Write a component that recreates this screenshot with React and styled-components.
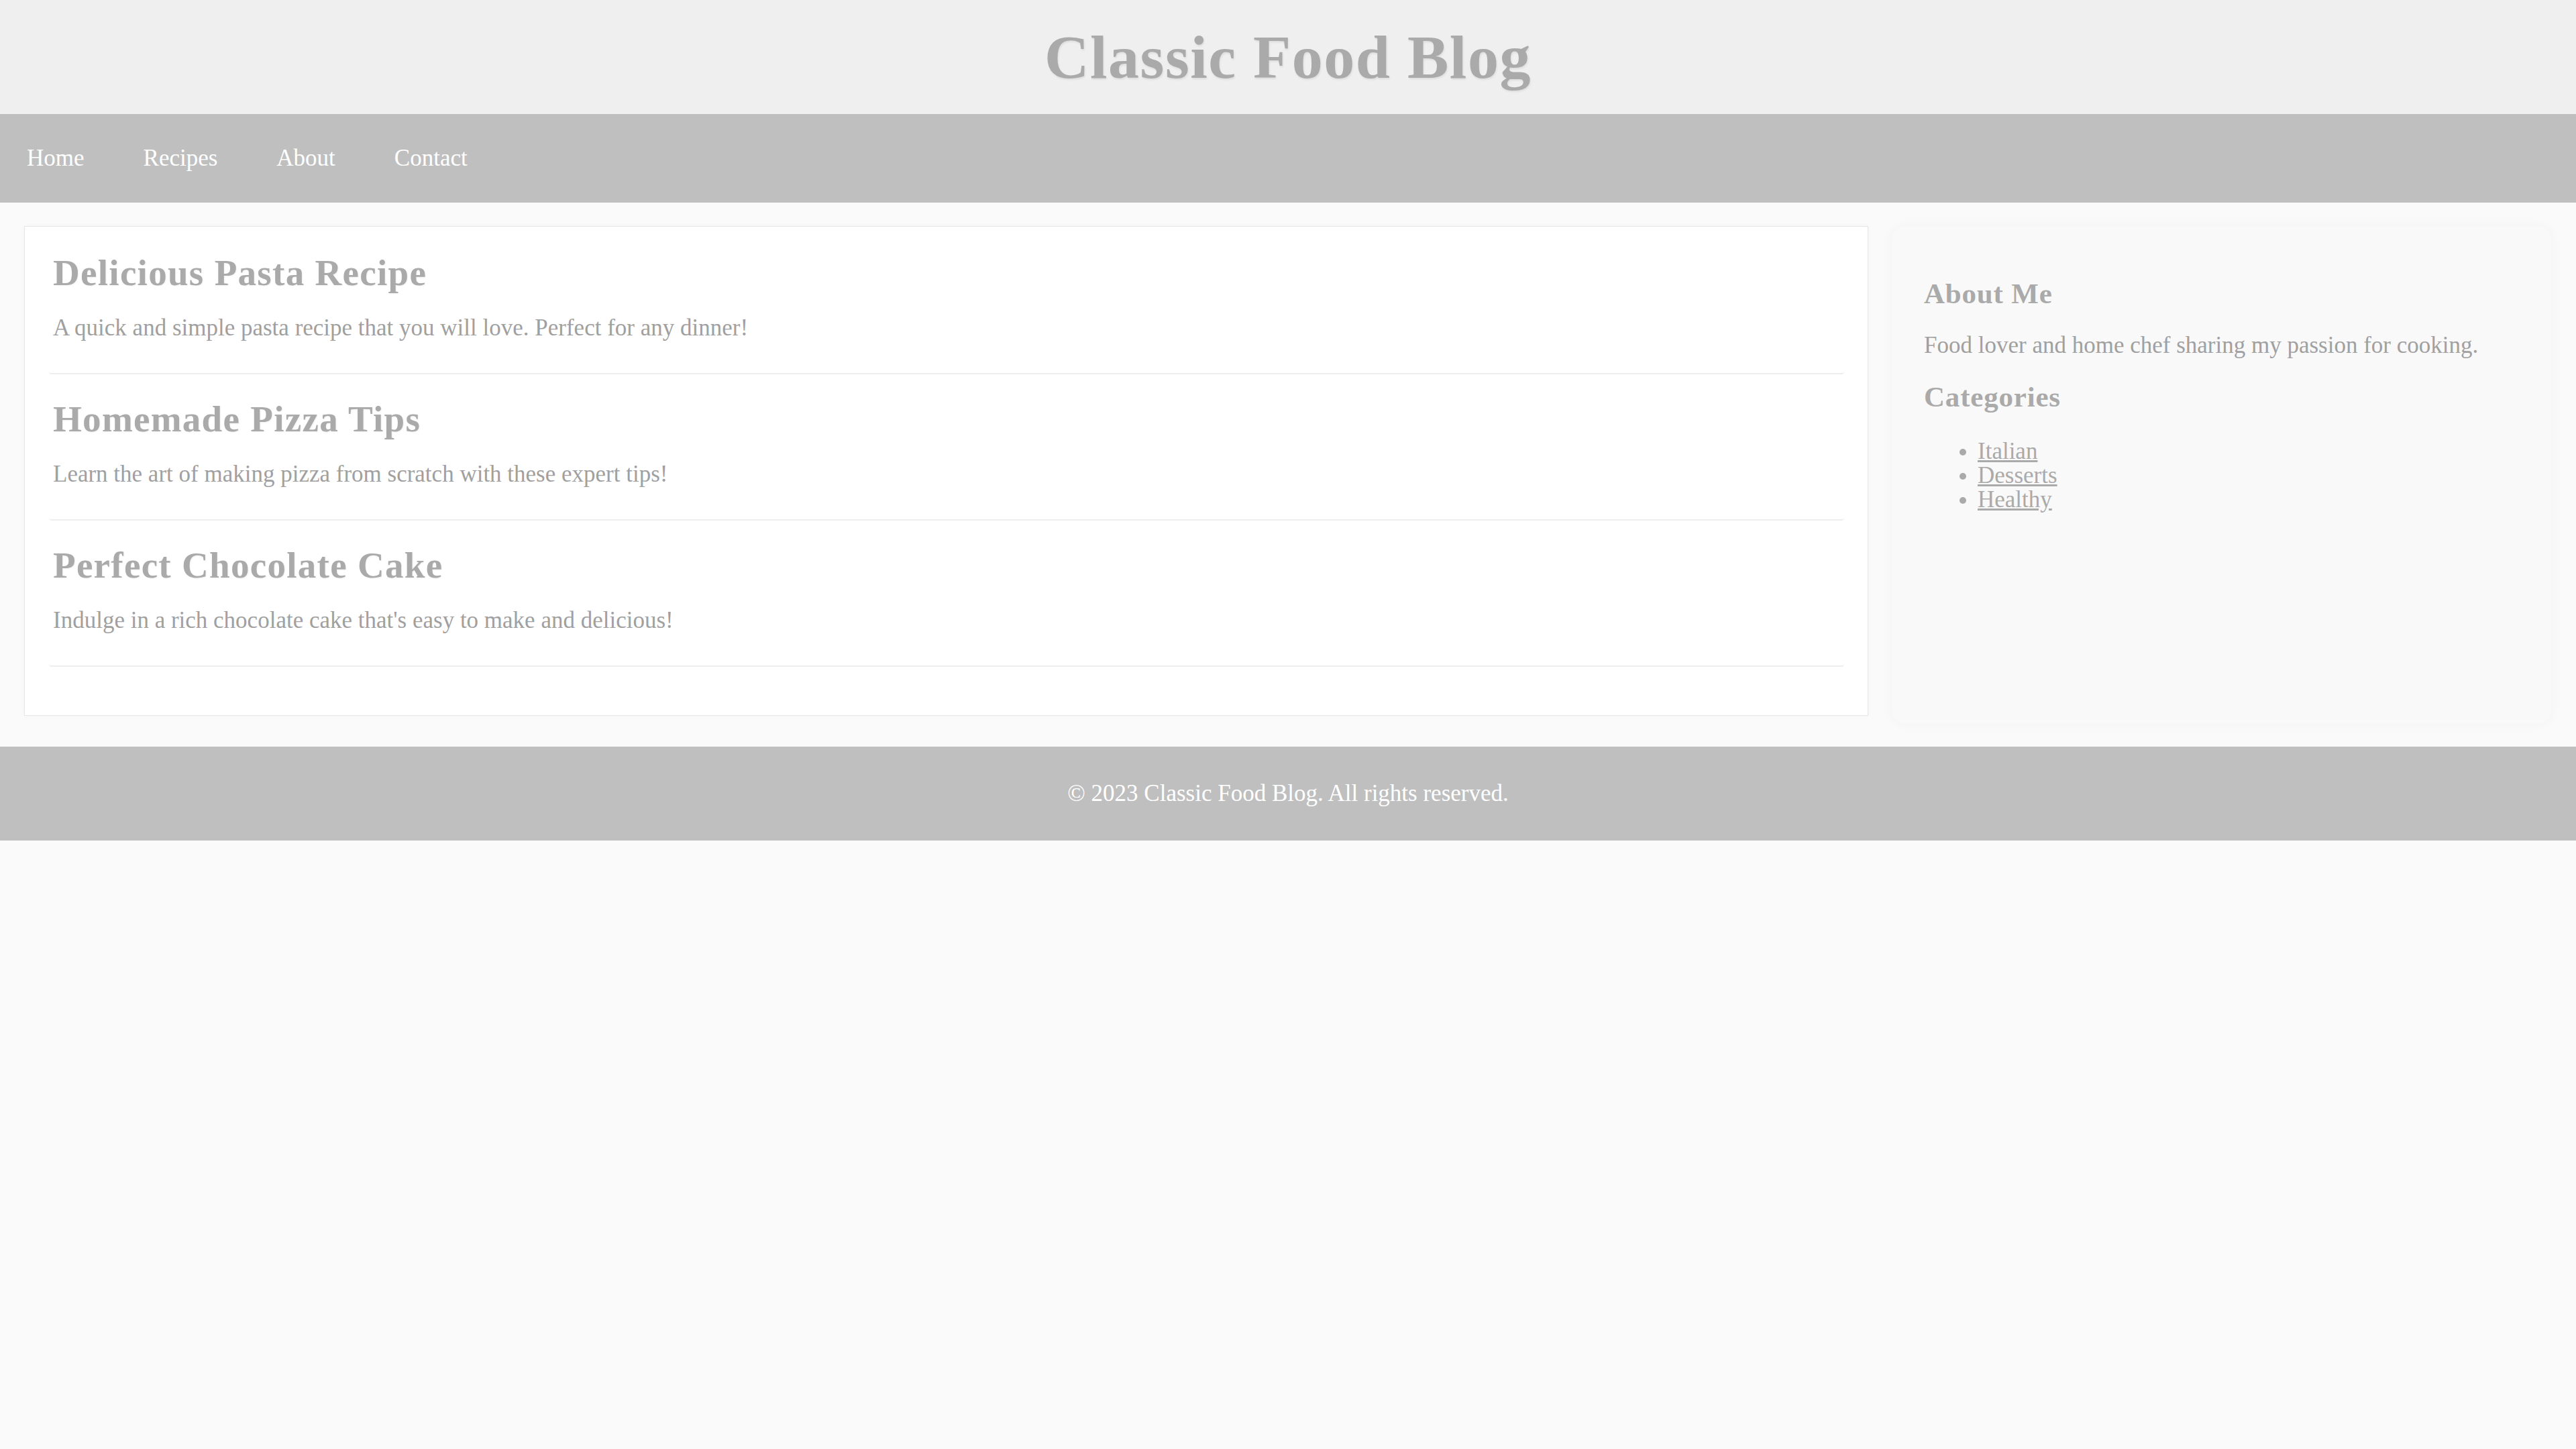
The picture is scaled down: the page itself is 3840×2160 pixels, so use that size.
import React from 'react';
import styled, { createGlobalStyle } from 'styled-components';

const GlobalStyle = createGlobalStyle`
    html, body {
        margin: 0;
        padding: 0;
        background: #fafafa;
        font-family: 'Liberation Serif', 'Times New Roman', serif;
        color: #999;
    }
`;

const Header = styled.header`
    height: 170px;
    background: #efefef;
    display: flex;
    align-items: center;
    justify-content: center;

    h1 {
        margin: 0;
        font-size: 92px;
        line-height: 91px;
        letter-spacing: 1.5px;
        font-weight: 700;
        color: #aaa;
        text-shadow: 1px 2px 3px rgba(0, 0, 0, 0.08);
    }
`;

const Nav = styled.nav`
    height: 132px;
    background: #bfbfbf;
    display: flex;
    align-items: center;
    gap: 8px;
`;

const NavLink = styled.a`
    padding: 0 40px;
    font-size: 35px;
    line-height: 40px;
    color: #fff;
    text-decoration: none;
`;

const Container = styled.div`
    display: flex;
    gap: 35px;
    padding: 35px 37px 34px 36px;
`;

const Main = styled.main`
    flex: 1;
    background: #fff;
    border: 1px solid #e6e6e6;
    box-shadow: 0 0 6px rgba(0, 0, 0, 0.03);
    padding: 40px 35px 34px 36px;
    margin-bottom: 12px;
`;

const Post = styled.article`
    padding: 0 6px 47px;
    margin-bottom: 38px;
    border-bottom: 2px solid #eee;
    border-radius: 0 0 4px 4px;

    h2 {
        margin: 0 0 33px;
        font-size: 55px;
        line-height: 58px;
        letter-spacing: 1.3px;
        font-weight: 700;
        color: #aaa;
        text-shadow: 1px 1px 2px rgba(0, 0, 0, 0.06);
    }

    p {
        margin: 0;
        font-size: 35px;
        line-height: 40px;
        color: #a0a0a0;
    }
`;

const Sidebar = styled.aside`
    width: 983px;
    box-sizing: border-box;
    background: #f9f9f9;
    border-radius: 20px;
    box-shadow: 0 0 20px rgba(0, 0, 0, 0.03);
    padding: 78px 48px 40px;

    h3 {
        margin: 0 0 34px;
        font-size: 43px;
        line-height: 46px;
        letter-spacing: 0.8px;
        font-weight: 700;
        color: #aaa;
    }

    p {
        margin: 0 0 34px;
        font-size: 35px;
        line-height: 40px;
        color: #a0a0a0;
    }
`;

const CategoryList = styled.ul`
    margin: 0;
    padding: 6px 0 0 80px;

    li {
        font-size: 35px;
        line-height: 36px;
        color: #aaa;
    }

    a {
        color: #aaa;
    }
`;

const Footer = styled.footer`
    height: 140px;
    background: #bfbfbf;
    display: flex;
    align-items: center;
    justify-content: center;
    color: #fff;
    font-size: 35px;
    line-height: 40px;
`;

const posts = [
    {
        title: 'Delicious Pasta Recipe',
        text: 'A quick and simple pasta recipe that you will love. Perfect for any dinner!'
    },
    {
        title: 'Homemade Pizza Tips',
        text: 'Learn the art of making pizza from scratch with these expert tips!'
    },
    {
        title: 'Perfect Chocolate Cake',
        text: "Indulge in a rich chocolate cake that's easy to make and delicious!"
    }
];

const links = ['Home', 'Recipes', 'About', 'Contact'];
const categories = ['Italian', 'Desserts', 'Healthy'];

const App = () => {
    return (
        <>
            <GlobalStyle />
            <Header>
                <h1>Classic Food Blog</h1>
            </Header>
            <Nav>
                {links.map(link => (
                    <NavLink key={link} href='#'>{link}</NavLink>
                ))}
            </Nav>
            <Container>
                <Main>
                    {posts.map(post => (
                        <Post key={post.title}>
                            <h2>{post.title}</h2>
                            <p>{post.text}</p>
                        </Post>
                    ))}
                </Main>
                <Sidebar>
                    <h3>About Me</h3>
                    <p>Food lover and home chef sharing my passion for cooking.</p>
                    <h3>Categories</h3>
                    <CategoryList>
                        {categories.map(cat => (
                            <li key={cat}><a href='#'>{cat}</a></li>
                        ))}
                    </CategoryList>
                </Sidebar>
            </Container>
            <Footer>© 2023 Classic Food Blog. All rights reserved.</Footer>
        </>
    );
};

export default App;
